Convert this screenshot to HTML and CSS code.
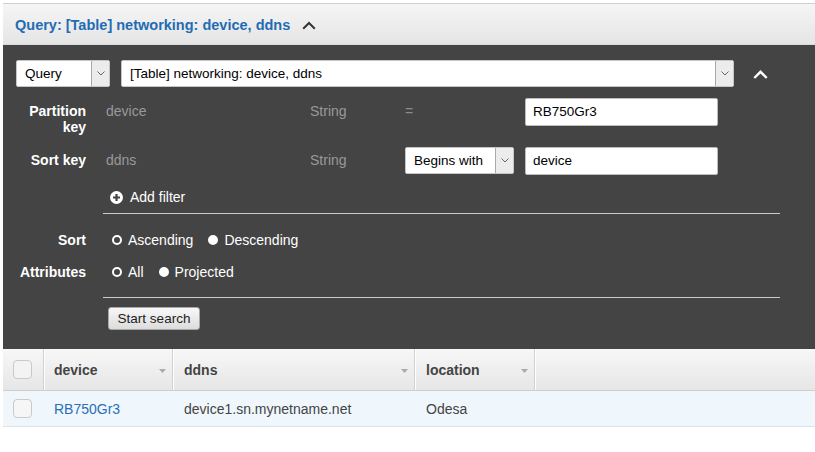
FILE: index.html
```html
<!DOCTYPE html>
<html>
<head>
<meta charset="utf-8">
<link rel="stylesheet" href="styles.css">
</head>
<body>
<div class="page">
  <div class="qheader">
    <span class="qtitle">Query: [Table] networking: device, ddns</span>
    <svg class="qchev" width="14" height="9" viewBox="0 0 14 9"><path d="M1.2 7.8 L7 2 L12.8 7.8" stroke="#333" stroke-width="2" fill="none"/></svg>
  </div>
  <div class="panel">
    <div class="toprow">
      <div class="sel sel-mode"><span class="sel-text">Query</span><span class="sel-btn"><svg width="8" height="5" viewBox="0 0 8 5"><path d="M0.5 0.5 L4 4 L7.5 0.5" stroke="#666" stroke-width="1" fill="none"/></svg></span></div>
      <div class="sel sel-table"><span class="sel-text">[Table] networking: device, ddns</span><span class="sel-btn"><svg width="8" height="5" viewBox="0 0 8 5"><path d="M0.5 0.5 L4 4 L7.5 0.5" stroke="#666" stroke-width="1" fill="none"/></svg></span></div>
      <svg class="collapse" width="15" height="9" viewBox="0 0 15 9"><path d="M1.3 8 L7.5 1.8 L13.7 8" stroke="#fff" stroke-width="2.4" fill="none"/></svg>
    </div>
    <div class="krow krow-first">
      <div class="klabel">Partition<br>key</div>
      <div class="kname">device</div>
      <div class="ktype">String</div>
      <div class="kop">=</div>
      <div class="inp">RB750Gr3</div>
    </div>
    <div class="krow krow-second">
      <div class="klabel">Sort key</div>
      <div class="kname">ddns</div>
      <div class="ktype">String</div>
      <div class="kop kop-sel">
        <div class="sel sel-op"><span class="sel-text">Begins with</span><span class="sel-btn"><svg width="8" height="5" viewBox="0 0 8 5"><path d="M0.5 0.5 L4 4 L7.5 0.5" stroke="#666" stroke-width="1" fill="none"/></svg></span></div>
      </div>
      <div class="inp">device</div>
    </div>
    <div class="addfilter">
      <svg width="13" height="13" viewBox="0 0 13 13"><circle cx="6.5" cy="6.5" r="6.5" fill="#fff"/><path d="M6.5 3v7M3 6.5h7" stroke="#444" stroke-width="2.2"/></svg>
      <span>Add filter</span>
    </div>
    <div class="sep sep-first"></div>
    <div class="optrow optrow-sort">
      <div class="optlabel">Sort</div>
      <div class="opts">
        <span class="opt"><span class="radio"></span>Ascending</span>
        <span class="opt"><span class="radio on"></span>Descending</span>
      </div>
    </div>
    <div class="optrow optrow-attr">
      <div class="optlabel">Attributes</div>
      <div class="opts">
        <span class="opt"><span class="radio"></span>All</span>
        <span class="opt"><span class="radio on"></span>Projected</span>
      </div>
    </div>
    <div class="sep sep-second"></div>
    <div class="btn">Start search</div>
  </div>
  <div class="grid">
    <div class="grid-head">
      <div class="hcell c-check"><span class="cb"></span></div>
      <div class="hcell c-device"><span class="htext">device</span><svg class="sarrow" width="7" height="4" viewBox="0 0 7 4"><path d="M0 0h7L3.5 4z" fill="#aaa"/></svg></div>
      <div class="hcell c-ddns"><span class="htext">ddns</span><svg class="sarrow" width="7" height="4" viewBox="0 0 7 4"><path d="M0 0h7L3.5 4z" fill="#aaa"/></svg></div>
      <div class="hcell c-loc"><span class="htext">location</span><svg class="sarrow" width="7" height="4" viewBox="0 0 7 4"><path d="M0 0h7L3.5 4z" fill="#aaa"/></svg></div>
    </div>
    <div class="grid-row">
      <div class="rcell c-check"><span class="cb cb-row"></span></div>
      <div class="rcell c-device"><a class="link">RB750Gr3</a></div>
      <div class="rcell c-ddns">device1.sn.mynetname.net</div>
      <div class="rcell c-loc">Odesa</div>
    </div>
  </div>
</div>
</body>
</html>
```

FILE: styles.css
```css
body {
  margin: 0;
  background: #fff;
  font-family: "Liberation Sans", Arial, sans-serif;
}

.page {
  margin: 3px 0 0 3px;
}

.qheader {
  height: 40px;
  border-top: 1px solid #cfcfcf;
  border-bottom: 1px solid #dadada;
  background: linear-gradient(#f5f5f5, #e5e5e5);
  display: flex;
  align-items: center;
  padding-left: 12px;
}

.qtitle {
  font-weight: bold;
  font-size: 14.5px;
  color: #1f6cb4;
  position: relative;
  top: 1px;
}

.qchev {
  margin-left: 12px;
  margin-top: 3px;
}

.panel {
  background: #444;
  padding: 15px 0 19px 13px;
}

.toprow {
  display: flex;
  align-items: center;
  height: 27px;
}

.sel {
  display: flex;
  height: 27px;
  box-sizing: border-box;
  border: 1px solid #c6c6c6;
  border-radius: 2px;
  background: #fff;
  font-size: 13.5px;
  color: #000;
}

.sel-text {
  flex: 1;
  padding-left: 8px;
  line-height: 25px;
  white-space: nowrap;
}

.sel-btn {
  width: 17px;
  border-left: 1px solid #a9a9a9;
  background: #ececec;
  display: flex;
  align-items: center;
  justify-content: center;
}

.sel-mode {
  width: 94px;
  margin-right: 11px;
}

.sel-table {
  width: 613px;
}

.sel-op {
  width: 109px;
}

.collapse {
  margin-left: 19px;
  margin-top: 2px;
}

.krow {
  display: flex;
  align-items: flex-start;
}

.krow-first {
  margin-top: 11px;
}

.krow-second {
  margin-top: 12px;
}

.klabel,
.optlabel {
  width: 70px;
  text-align: right;
  font-weight: bold;
  font-size: 14px;
  color: #fff;
  line-height: 16px;
}

.klabel {
  padding-top: 5px;
}

.kname,
.ktype,
.kop {
  font-size: 14px;
  line-height: 16px;
  color: #999;
  padding-top: 5px;
}

.kname {
  margin-left: 20px;
  width: 204px;
}

.ktype {
  width: 95px;
}

.kop {
  width: 120px;
  color: #8a8a8a;
}

.kop-sel {
  padding-top: 0;
}

.inp {
  width: 193px;
  height: 28px;
  box-sizing: border-box;
  border: 1px solid #bdbdbd;
  border-radius: 2px;
  background: #fff;
  font-size: 13.5px;
  padding-left: 7px;
  line-height: 26px;
  color: #000;
}

.addfilter {
  margin: 14px 0 0 94px;
  display: flex;
  align-items: center;
  gap: 7px;
  color: #fff;
  font-size: 14px;
  line-height: 16px;
}

.sep {
  height: 1px;
  background: #cbcbcb;
  margin: 0 35px 0 87px;
}

.sep-first {
  margin-top: 8px;
}

.sep-second {
  margin-top: 17px;
}

.optrow {
  display: flex;
  align-items: center;
  line-height: 16px;
}

.optrow-sort {
  margin-top: 18px;
}

.optrow-attr {
  margin-top: 16px;
}

.opts {
  margin-left: 26px;
  display: flex;
  align-items: center;
  font-size: 14px;
  color: #fff;
}

.opt {
  display: flex;
  align-items: center;
}

.opt + .opt {
  margin-left: 15px;
}

.radio {
  width: 10px;
  height: 10px;
  border-radius: 50%;
  box-sizing: border-box;
  border: 2px solid #fff;
  margin-right: 6px;
}

.radio.on {
  background: #fff;
}

.btn {
  margin: 9px 0 0 92px;
  width: 92px;
  height: 23px;
  box-sizing: border-box;
  border: 1px solid #a8a8a8;
  border-radius: 3px;
  background: linear-gradient(#f8f8f8, #dcdcdc);
  font-size: 13.5px;
  color: #222;
  text-align: center;
  line-height: 21px;
}

.grid-head {
  display: flex;
  height: 41px;
  background: linear-gradient(#f7f7f7, #e6e6e6);
  border-bottom: 1px solid #cfcfcf;
}

.hcell {
  display: flex;
  align-items: center;
  box-sizing: border-box;
  border-right: 1px solid #d0d0d0;
  box-shadow: 1px 0 0 #fff;
  font-weight: bold;
  font-size: 14px;
  color: #444;
}

.c-check {
  width: 41px;
  padding-left: 10px;
  box-sizing: border-box;
}

.c-device {
  width: 129px;
  padding-left: 10px;
}

.c-ddns {
  width: 242px;
  padding-left: 11px;
}

.c-loc {
  width: 120px;
  padding-left: 11px;
}

.htext {
  flex: 1;
}

.sarrow {
  margin-right: 6px;
  margin-top: 2px;
}

.cb {
  display: block;
  width: 19px;
  height: 19px;
  box-sizing: border-box;
  border: 1px solid #c9c9c9;
  border-radius: 4px;
  background: #f3f3f3;
}

.cb-row {
  background: #f6f6f6;
}

.grid-row {
  display: flex;
  align-items: center;
  height: 35px;
  background: #eff7fd;
  border-bottom: 1px solid #dde2e6;
}

.rcell {
  box-sizing: border-box;
  font-size: 14px;
  color: #444;
}

.link {
  color: #2a6fb7;
}
```
